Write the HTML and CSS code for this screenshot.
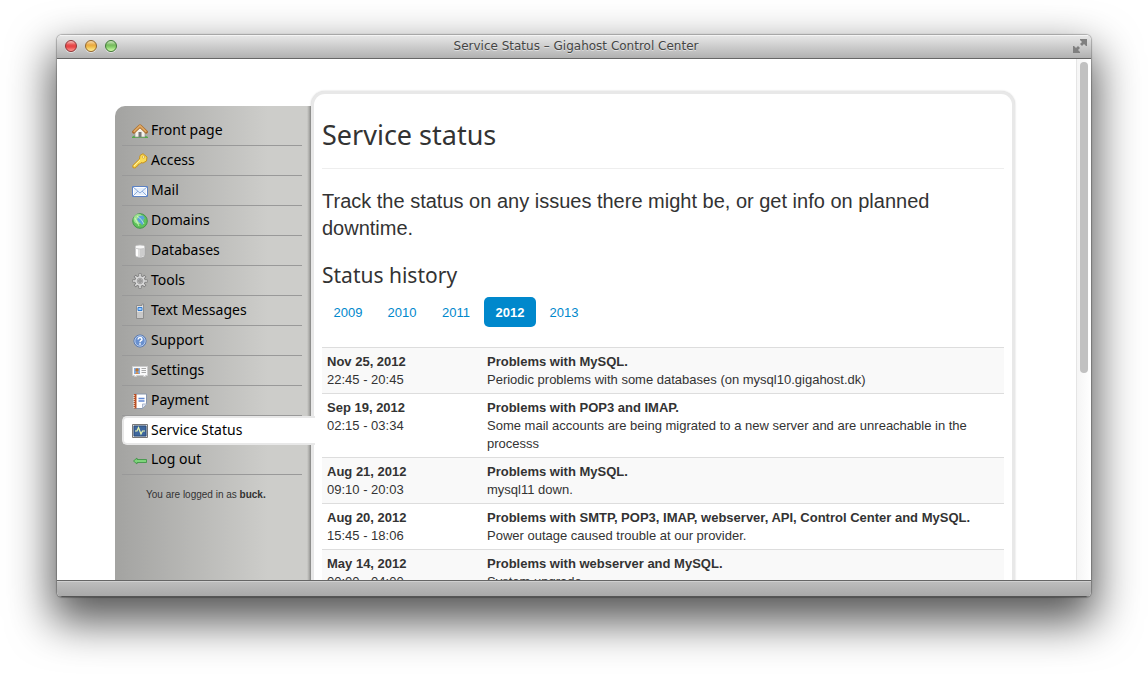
FILE: index.html
```html
<!DOCTYPE html>
<html lang="en">
<head>
<meta charset="utf-8">
<title>Service Status – Gigahost Control Center</title>
<link rel="stylesheet" href="styles.css">
</head>
<body>
<div class="window">
  <header class="titlebar">
    <div class="lights">
      <button class="light red" aria-label="Close"></button>
      <button class="light yellow" aria-label="Minimize"></button>
      <button class="light green" aria-label="Zoom"></button>
    </div>
    <span class="window-title">Service Status – Gigahost Control Center</span>
    <button class="fullscreen" aria-label="Full screen">
      <svg width="14" height="14" viewBox="0 0 14 14" fill="#808080"><path d="M7 0h7v7h-1l-2-2-2 2-2-2 2-2-2-2zM0 7h1l2 2 2-2 2 2-2 2 2 2v1H0z"/></svg>
    </button>
  </header>
  <div class="viewport">
    <div class="page">
      <div class="layout">
        <nav class="sidebar">
          <ul class="menu">
            <li><a href="#"><svg class="icon" viewBox="0 0 16 16"><path d="M0 14q3-3 7-1 5-2 9 1v1H0z" fill="#55a84a"/><path d="M3 8l5-5 5 5v6H3z" fill="#f4f1ea" stroke="#999" stroke-width=".7"/><path d="M6.500 9h3v5h-3z" fill="#777"/><path d="M1.700 9L8 3l6.300 6" fill="none" stroke="#a8692a" stroke-width="3.200" stroke-linecap="round" stroke-linejoin="round"/><path d="M1.700 8.800L8 2.800l6.300 6" fill="none" stroke="#dfa963" stroke-width="1.800"/></svg>Front page</a></li>
            <li><a href="#"><svg class="icon" viewBox="0 0 16 16"><path d="M8 2.500L11 .7l4 3.300-.5 4-3.500 2-2-.3-1.300 1.300-1.500.3-.5 1.700-1.500.4L3.500 15 1 14.700.8 12.500 7.500 6z" fill="#fbdc55" stroke="#c8921e"/><circle cx="11.500" cy="4" r="1.200" fill="#fff8cc" stroke="#c8921e" stroke-width=".6"/><path d="M2 13l6-6" stroke="#fff3a5"/></svg>Access</a></li>
            <li><a href="#"><svg class="icon" viewBox="0 0 16 16"><path d="M.5 3.500h15v10H.5z" fill="#e6effb" stroke="#5c82c4"/><path d="M1.500 4.500h13v8h-13z" fill="none" stroke="#fff"/><path d="M1 13l5-5M15 13l-5-5M1 4l7 6 7-6" fill="none" stroke="#8babdc"/></svg>Mail</a></li>
            <li><a href="#"><svg class="icon" viewBox="0 0 16 16"><circle cx="8" cy="8" r="7.300" fill="#5fc25a" stroke="#43964a"/><circle cx="6.500" cy="6" r="5" fill="#b6eda6" opacity=".75"/><path d="M7 3l4-.5 2 3-2 1 1 3-2 3-1-2-2-1-2-3z" fill="#5ba3d8"/><path d="M3 5q3 6 4 8M5 3q5 3 7 8" fill="none" stroke="#dcffd0" stroke-width=".7"/></svg>Domains</a></li>
            <li><a href="#"><svg class="icon" viewBox="0 0 16 16"><path d="M3 4v8c0 4 10 4 10 0V4z" fill="#dedede" stroke="#a5a5a5" stroke-width=".8"/><path d="M5 5v8" stroke="#fff" stroke-width="2"/><path d="M9 6v8M11 6v7" stroke="#bbb"/><ellipse cx="8" cy="4" rx="5" ry="2" fill="#f8f8f8" stroke="#c0c0c0" stroke-width=".8"/></svg>Databases</a></li>
            <li><a href="#"><svg class="icon" viewBox="0 0 16 16"><g stroke="#777" stroke-width="3"><path d="M8 .5v15M.5 8h15M2.700 2.700l10.600 10.600M13.300 2.700L2.700 13.300"/></g><circle cx="8" cy="8" r="5.500" fill="#777"/><g stroke="#ddd" stroke-width="1.600"><path d="M8 1v14M1 8h14M3.200 3.200l9.600 9.600M12.800 3.200l-9.600 9.600"/></g><circle cx="8" cy="8" r="4.800" fill="#d8d8d8"/><circle cx="8" cy="8" r="2.800" fill="#c0c0c0" stroke="#999" stroke-width=".8"/><circle cx="8" cy="8" r="1.400" fill="#aaa" stroke="#808080" stroke-width=".7"/></svg>Tools</a></li>
            <li><a href="#"><svg class="icon" viewBox="0 0 16 16"><path d="M4.500 2.500H10V1h1.500v14.500h-7z" fill="#e4e4e4" stroke="#888" stroke-width=".9"/><path d="M6 4.500h4v3H6z" fill="#9ccbff" stroke="#347ed2"/><path d="M5.500 10h5M5.500 12h5M5.500 14h5" stroke="#777" stroke-dasharray="1 1"/></svg>Text Messages</a></li>
            <li><a href="#"><svg class="icon" viewBox="0 0 16 16"><circle cx="8" cy="8" r="6" fill="#6990cf" stroke="#4c70ae"/><circle cx="8" cy="8" r="5.200" fill="none" stroke="#cbdcf4" stroke-width=".8"/><path d="M6 6.500q.3-2 2-2t2 1.700q0 1-1 1.500t-1 1.500M8 10.300v1.500" fill="none" stroke="#fff" stroke-width="1.500"/></svg>Support</a></li>
            <li><a href="#"><svg class="icon" viewBox="0 0 16 16"><path d="M.5 3.500h15v9h-2v1h-2v-1h-7v1h-2v-1h-2z" fill="#fafafa" stroke="#ccc"/><path d="M2 5h6v6H2z" fill="#83ace0"/><circle cx="5" cy="7" r="1.700" fill="#bb7431"/><path d="M3 11q2-4 4 0z" fill="#d98c46"/><path d="M9.500 5.500h4.500M9.500 7.500h4.500M9.500 9.500h4.500" stroke="#aaa"/></svg>Settings</a></li>
            <li><a href="#"><svg class="icon" viewBox="0 0 16 16"><path d="M3 1h11.500v10l-4 4.500H3z" fill="#fff" stroke="#8896aa"/><path d="M2 1h2.500v14.500H2z" fill="#b95025"/><path d="M1 2.500h2M1 4.500h2M1 6.500h2M1 8.500h2M1 10.500h2M1 12.500h2M1 14.500h2" stroke="#ead6c8" stroke-width=".8"/><path d="M6.500 5.500h6M6.500 8h6" stroke="#6188d3" stroke-width="1.700"/><path d="M10.500 15v-4h4" fill="#dde5f5" stroke="#aab6cc"/></svg>Payment</a></li>
            <li class="active"><a href="#" aria-current="page"><svg class="icon" viewBox="0 0 16 16"><path d="M.5 1.500h15v13H.5z" fill="#ddd" stroke="#777"/><path d="M2 3h12v10H2z" fill="#3e679e" stroke="#294a79"/><path d="M3 8h2l1.500-3.500L9 11l1.500-3H13" fill="none" stroke="#e7f7b0" stroke-width="1.200"/></svg>Service Status</a></li>
            <li><a href="#"><svg class="icon" viewBox="0 0 16 16"><path d="M1.500 9L5 6v1.500h9.500v3H5V12z" fill="#7ed47a" stroke="#43954a" stroke-width=".9"/></svg>Log out</a></li>
          </ul>
          <p class="login">You are logged in as <strong>buck.</strong></p>
        </nav>
        <main class="panel">
          <h1>Service status</h1>
          <p class="lead">Track the status on any issues there might be, or get info on planned downtime.</p>
          <h2>Status history</h2>
          <nav class="years">
            <a href="#">2009</a><a href="#">2010</a><a href="#">2011</a><a href="#" class="current">2012</a><a href="#">2013</a>
          </nav>
          <table class="history">
            <tbody>
              <tr><td><strong>Nov 25, 2012</strong><br>22:45 - 20:45</td><td><strong>Problems with MySQL.</strong><br>Periodic problems with some databases (on mysql10.gigahost.dk)</td></tr>
              <tr><td><strong>Sep 19, 2012</strong><br>02:15 - 03:34</td><td><strong>Problems with POP3 and IMAP.</strong><br>Some mail accounts are being migrated to a new server and are unreachable in the processs</td></tr>
              <tr><td><strong>Aug 21, 2012</strong><br>09:10 - 20:03</td><td><strong>Problems with MySQL.</strong><br>mysql11 down.</td></tr>
              <tr><td><strong>Aug 20, 2012</strong><br>15:45 - 18:06</td><td><strong>Problems with SMTP, POP3, IMAP, webserver, API, Control Center and MySQL.</strong><br>Power outage caused trouble at our provider.</td></tr>
              <tr><td><strong>May 14, 2012</strong><br>00:00 - 04:00</td><td><strong>Problems with webserver and MySQL.</strong><br>System upgrade.</td></tr>
            </tbody>
          </table>
        </main>
      </div>
    </div>
    <div class="scrollbar"><div class="thumb"></div></div>
  </div>
  <footer class="statusbar"></footer>
</div>
</body>
</html>
```
FILE: styles.css
```css
* { box-sizing: border-box; }
body {
  margin: 0;
  height: 100vh;
  padding: 35px 57px 78px;
  display: flex;
  background: #fff;
  color: #333;
  font: 13px/18px "Liberation Sans", Arial, sans-serif;
  overflow: hidden;
}
h1, h2, p, ul { margin: 0; padding: 0; }
button { border: 0; padding: 0; background: none; }
a { text-decoration: none; }

.window {
  flex: 1;
  min-width: 0;
  display: flex;
  flex-direction: column;
  border-radius: 5px;
  overflow: hidden;
  background: #fff;
  box-shadow: 0 0 1px 1px rgba(0,0,0,.25), 0 20px 44px 5px rgba(0,0,0,.66);
}
.titlebar {
  flex: none;
  height: 24px;
  display: grid;
  grid-template-columns: 60px 1fr 60px;
  align-items: center;
  padding: 0 4px 2px 8px;
  border-top: 1px solid #f4f4f4;
  border-bottom: 1px solid #666;
  background: linear-gradient(#e6e6e6, #b1b1b1);
}
.lights { display: flex; gap: 8px; }
.light {
  width: 12px;
  height: 12px;
  border-radius: 50%;
  border: 1px solid;
  box-shadow: 0 1px 0 rgba(255,255,255,.5);
}
.red { border-color: #8f3335; background: linear-gradient(#f6c4c0, #e8494a 40%, #e84546 60%, #ff9b94); }
.yellow { border-color: #93662b; background: linear-gradient(#f8dcae, #eaa940 40%, #f0be4d 60%, #fff29b); }
.green { border-color: #3f7735; background: linear-gradient(#cfe8c2, #76ba5c 40%, #86cf6b 60%, #d5ffad); }
.window-title {
  text-align: center;
  font: 12px/18px "DejaVu Sans", sans-serif;
  color: #444;
  text-shadow: 0 1px 0 rgba(255,255,255,.5);
}
.fullscreen { justify-self: end; height: 14px; }
.fullscreen svg { display: block; }

.viewport { flex: 1; min-height: 0; display: flex; overflow: hidden; }
.page { flex: 1; min-width: 0; padding: 32px 61px 0 58px; overflow: hidden; }
.layout { display: flex; min-height: 100%; }
.sidebar {
  flex: 0 0 196px;
  margin-top: 15px;
  padding: 10px 9px 0 7px;
  border-radius: 10px 0 0 0;
  background:
    linear-gradient(to left, rgba(0,0,0,.3), rgba(0,0,0,0)) right / 4px 100% no-repeat,
    linear-gradient(to right, #a3a3a1, #cdcdca 78%);
}
.menu { list-style: none; font: 14px/27px "Noto Sans", sans-serif; }
.menu li { height: 30px; border-bottom: 1px solid #999; }
.menu a { display: flex; padding-left: 10px; gap: 3px; color: #000; }
.icon { flex: none; width: 16px; height: 16px; margin-top: 7px; }
.menu .active {
  position: relative;
  z-index: 1;
  height: 29px;
  margin-right: -13px;
  line-height: 23px;
  border: 2px solid #e8e8e8;
  border-right: 0;
  border-radius: 5px 0 0 5px;
  background: #fff;
}
.active a { padding-left: 8px; }
.active .icon { margin-top: 5px; }
.login { padding: 11px 0 0 24px; font-size: 10px; }

.panel {
  flex: 1;
  min-width: 0;
  padding: 26px 8px 0;
  border: 3px solid #e8e8e8;
  border-bottom: 0;
  border-radius: 14px 14px 0 0;
  background: #fff;
  box-shadow: 0 0 2px rgba(0,0,0,.2);
}
h1, h2 { font-family: "Noto Sans", sans-serif; font-weight: 400; }
h1 { font-size: 27px; line-height: 30px; padding-bottom: 18px; border-bottom: 1px solid #eee; }
.lead { margin-top: 19px; font-size: 20px; line-height: 27px; }
h2 { margin-top: 18px; font-size: 21px; line-height: 30px; }
.years { display: flex; gap: 2px; margin: 7px 0 20px; }
.years a { width: 52px; padding: 7px 0 5px; text-align: center; border-radius: 5px; color: #08c; }
.years .current { color: #fff; background: #08c; font-weight: 700; }
.history { width: 100%; border-collapse: collapse; table-layout: fixed; }
.history td { padding: 5px 5px 4px; vertical-align: top; border-top: 1px solid #ddd; }
.history td:first-child { width: 160px; }
.history tr:nth-child(odd) { background: #f9f9f9; }

.scrollbar { flex: none; width: 15px; padding: 3px 3px 0; border-left: 1px solid #e5e5e5; background: linear-gradient(to right, #f5f5f5, #fff); }
.thumb { height: 60%; width: 8px; border-radius: 4px; background: #c1c1c1; }
.statusbar {
  flex: none;
  height: 17px;
  border-top: 1px solid #666;
  border-bottom: 1px solid #555;
  background: linear-gradient(#d0d0d0 1px, #bdbdbd 1px, #a9a9a9);
}
```
